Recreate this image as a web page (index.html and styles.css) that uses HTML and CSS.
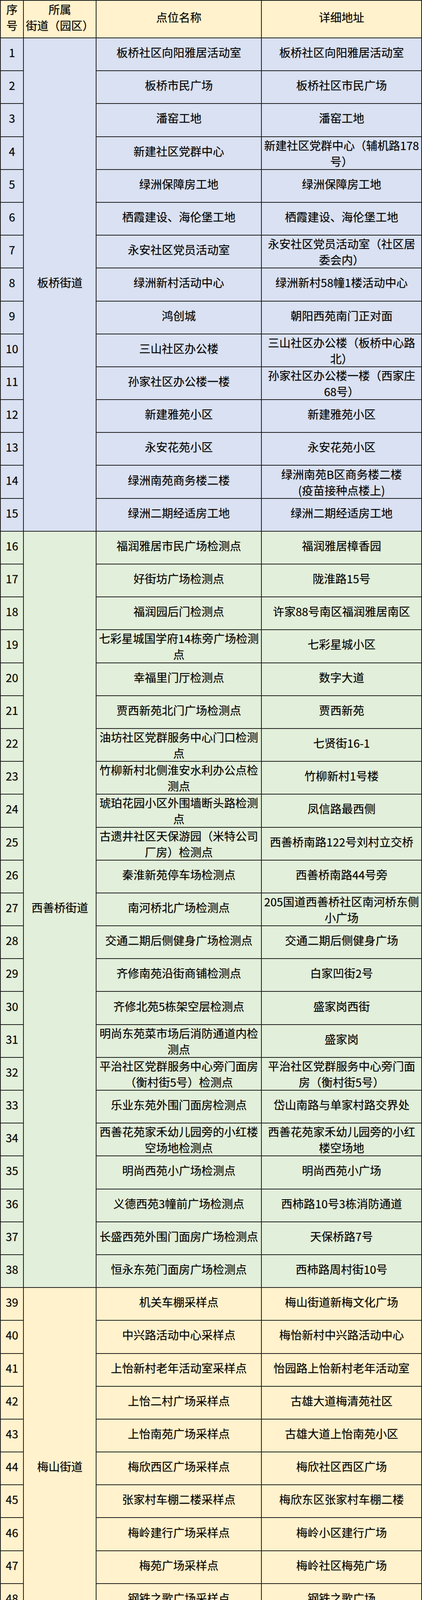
FILE: index.html
```html
<!DOCTYPE html>
<html lang="zh-CN">
<head>
<meta charset="utf-8">
<title>核酸检测采样点位表</title>
<link rel="stylesheet" href="styles.css">
</head>
<body>
<div class="sheet">
  <div class="cell head two no">序<br>号</div>
  <div class="cell head two st">所属<br>街道（园区）</div>
  <div class="cell head nm">点位名称</div>
  <div class="cell head ad">详细地址</div>

  <div class="cell b no">1</div><div class="cell b st span15">板桥街道</div><div class="cell b nm">板桥社区向阳雅居活动室</div><div class="cell b ad">板桥社区向阳雅居活动室</div>
  <div class="cell b no">2</div><div class="cell b nm">板桥市民广场</div><div class="cell b ad">板桥社区市民广场</div>
  <div class="cell b no">3</div><div class="cell b nm">潘窑工地</div><div class="cell b ad">潘窑工地</div>
  <div class="cell b no">4</div><div class="cell b nm">新建社区党群中心</div><div class="cell b ad two">新建社区党群中心（辅机路178<br>号）</div>
  <div class="cell b no">5</div><div class="cell b nm">绿洲保障房工地</div><div class="cell b ad">绿洲保障房工地</div>
  <div class="cell b no">6</div><div class="cell b nm">栖霞建设、海伦堡工地</div><div class="cell b ad">栖霞建设、海伦堡工地</div>
  <div class="cell b no">7</div><div class="cell b nm">永安社区党员活动室</div><div class="cell b ad two">永安社区党员活动室（社区居<br>委会内）</div>
  <div class="cell b no">8</div><div class="cell b nm">绿洲新村活动中心</div><div class="cell b ad">绿洲新村58幢1楼活动中心</div>
  <div class="cell b no">9</div><div class="cell b nm">鸿创城</div><div class="cell b ad">朝阳西苑南门正对面</div>
  <div class="cell b no">10</div><div class="cell b nm">三山社区办公楼</div><div class="cell b ad two">三山社区办公楼（板桥中心路<br>北）</div>
  <div class="cell b no">11</div><div class="cell b nm">孙家社区办公楼一楼</div><div class="cell b ad two">孙家社区办公楼一楼（西家庄<br>68号）</div>
  <div class="cell b no">12</div><div class="cell b nm">新建雅苑小区</div><div class="cell b ad">新建雅苑小区</div>
  <div class="cell b no">13</div><div class="cell b nm">永安花苑小区</div><div class="cell b ad">永安花苑小区</div>
  <div class="cell b no">14</div><div class="cell b nm">绿洲南苑商务楼二楼</div><div class="cell b ad two">绿洲南苑B区商务楼二楼<br>(疫苗接种点楼上)</div>
  <div class="cell b no">15</div><div class="cell b nm">绿洲二期经适房工地</div><div class="cell b ad">绿洲二期经适房工地</div>

  <div class="cell g no">16</div><div class="cell g st span23">西善桥街道</div><div class="cell g nm">福润雅居市民广场检测点</div><div class="cell g ad">福润雅居樟香园</div>
  <div class="cell g no">17</div><div class="cell g nm">好街坊广场检测点</div><div class="cell g ad">陇淮路15号</div>
  <div class="cell g no">18</div><div class="cell g nm">福润园后门检测点</div><div class="cell g ad">许家88号南区福润雅居南区</div>
  <div class="cell g no">19</div><div class="cell g nm two">七彩星城国学府14栋旁广场检测<br>点</div><div class="cell g ad">七彩星城小区</div>
  <div class="cell g no">20</div><div class="cell g nm">幸福里门厅检测点</div><div class="cell g ad">数字大道</div>
  <div class="cell g no">21</div><div class="cell g nm">贾西新苑北门广场检测点</div><div class="cell g ad">贾西新苑</div>
  <div class="cell g no">22</div><div class="cell g nm two">油坊社区党群服务中心门口检测<br>点</div><div class="cell g ad">七贤街16-1</div>
  <div class="cell g no">23</div><div class="cell g nm two">竹柳新村北侧淮安水利办公点检<br>测点</div><div class="cell g ad">竹柳新村1号楼</div>
  <div class="cell g no">24</div><div class="cell g nm two">琥珀花园小区外围墙断头路检测<br>点</div><div class="cell g ad">凤信路最西侧</div>
  <div class="cell g no">25</div><div class="cell g nm two">古遗井社区天保游园（米特公司<br>厂房）检测点</div><div class="cell g ad">西善桥南路122号刘村立交桥</div>
  <div class="cell g no">26</div><div class="cell g nm">秦淮新苑停车场检测点</div><div class="cell g ad">西善桥南路44号旁</div>
  <div class="cell g no">27</div><div class="cell g nm">南河桥北广场检测点</div><div class="cell g ad two">205国道西善桥社区南河桥东侧<br>小广场</div>
  <div class="cell g no">28</div><div class="cell g nm">交通二期后侧健身广场检测点</div><div class="cell g ad">交通二期后侧健身广场</div>
  <div class="cell g no">29</div><div class="cell g nm">齐修南苑沿街商铺检测点</div><div class="cell g ad">白家凹街2号</div>
  <div class="cell g no">30</div><div class="cell g nm">齐修北苑5栋架空层检测点</div><div class="cell g ad">盛家岗西街</div>
  <div class="cell g no">31</div><div class="cell g nm two">明尚东苑菜市场后消防通道内检<br>测点</div><div class="cell g ad">盛家岗</div>
  <div class="cell g no">32</div><div class="cell g nm two">平治社区党群服务中心旁门面房<br>（衡村街5号）检测点</div><div class="cell g ad two">平治社区党群服务中心旁门面<br>房（衡村街5号）</div>
  <div class="cell g no">33</div><div class="cell g nm">乐业东苑外围门面房检测点</div><div class="cell g ad">岱山南路与单家村路交界处</div>
  <div class="cell g no">34</div><div class="cell g nm two">西善花苑家禾幼儿园旁的小红楼<br>空场地检测点</div><div class="cell g ad two">西善花苑家禾幼儿园旁的小红<br>楼空场地</div>
  <div class="cell g no">35</div><div class="cell g nm">明尚西苑小广场检测点</div><div class="cell g ad">明尚西苑小广场</div>
  <div class="cell g no">36</div><div class="cell g nm">义德西苑3幢前广场检测点</div><div class="cell g ad">西柿路10号3栋消防通道</div>
  <div class="cell g no">37</div><div class="cell g nm">长盛西苑外围门面房广场检测点</div><div class="cell g ad">天保桥路7号</div>
  <div class="cell g no">38</div><div class="cell g nm">恒永东苑门面房广场检测点</div><div class="cell g ad">西柿路周村街10号</div>

  <div class="cell y no">39</div><div class="cell y st span11">梅山街道</div><div class="cell y nm">机关车棚采样点</div><div class="cell y ad">梅山街道新梅文化广场</div>
  <div class="cell y no">40</div><div class="cell y nm">中兴路活动中心采样点</div><div class="cell y ad">梅怡新村中兴路活动中心</div>
  <div class="cell y no">41</div><div class="cell y nm">上怡新村老年活动室采样点</div><div class="cell y ad">怡园路上怡新村老年活动室</div>
  <div class="cell y no">42</div><div class="cell y nm">上怡二村广场采样点</div><div class="cell y ad">古雄大道梅清苑社区</div>
  <div class="cell y no">43</div><div class="cell y nm">上怡南苑广场采样点</div><div class="cell y ad">古雄大道上怡南苑小区</div>
  <div class="cell y no">44</div><div class="cell y nm">梅欣西区广场采样点</div><div class="cell y ad">梅欣社区西区广场</div>
  <div class="cell y no">45</div><div class="cell y nm">张家村车棚二楼采样点</div><div class="cell y ad">梅欣东区张家村车棚二楼</div>
  <div class="cell y no">46</div><div class="cell y nm">梅岭建行广场采样点</div><div class="cell y ad">梅岭小区建行广场</div>
  <div class="cell y no">47</div><div class="cell y nm">梅苑广场采样点</div><div class="cell y ad">梅岭社区梅苑广场</div>
  <div class="cell y no">48</div><div class="cell y nm">钢铁之歌广场采样点</div><div class="cell y ad">钢铁之歌广场</div>
  <div class="cell y no">49</div><div class="cell y nm">热轧厂1780食堂采样点</div><div class="cell y ad">梅钢公司热轧厂1780食堂</div>

  <div class="cell b no">50</div><div class="cell b st span18">古雄街道</div><div class="cell b nm">古雄老村部采样点</div><div class="cell b ad">板桥老街古雄老村部</div>
  <div class="cell b no">51</div><div class="cell b nm">和昌湾景售楼处采样点</div><div class="cell b ad">和昌湾景售楼处</div>
  <div class="cell b no">52</div><div class="cell b nm">富力星光邻商贸体采样点</div><div class="cell b ad">富力星光邻商贸体</div>
  <div class="cell b no">53</div><div class="cell b nm">金地一期物业采样点</div><div class="cell b ad">金地一期物业办公室</div>
  <div class="cell b no">54</div><div class="cell b nm two">金地二期大方社区党群服务中心<br>采样点</div><div class="cell b ad two">金地二期大方社区党群服务中<br>心</div>
  <div class="cell b no">55</div><div class="cell b nm">金地三期嘉伦光彩大药房采样点</div><div class="cell b ad">金地三期嘉伦光彩大药房</div>
  <div class="cell b no">56</div><div class="cell b nm">金地八期社区广场采样点</div><div class="cell b ad">金地八期社区广场</div>
  <div class="cell b no">57</div><div class="cell b nm">宋都南郡为民服务中心采样点</div><div class="cell b ad two">新湖大道12号宋都南郡为民服<br>务中心</div>
  <div class="cell b no">58</div><div class="cell b nm">宋都南郡北区物业用房采样点</div><div class="cell b ad">宋都南郡北区物业用房</div>
  <div class="cell b no">59</div><div class="cell b nm">大方小学采样点</div><div class="cell b ad">原大方小学</div>
  <div class="cell b no">60</div><div class="cell b nm">柿子树中心村百富家具厂采样点</div><div class="cell b ad">柿子树中心村百富家具厂内</div>
  <div class="cell b no">61</div><div class="cell b nm">柿子树社区党群服务中心采样点</div><div class="cell b ad">柿子树社区党群服务中心</div>
  <div class="cell b no">62</div><div class="cell b nm">新林社区党群服务中心采样点</div><div class="cell b ad">新林社区党群服务中心</div>
  <div class="cell b no">63</div><div class="cell b nm">吾悦广场采样点</div><div class="cell b ad two">新林大道与新城大街交叉口西<br>300米吾悦广场</div>
  <div class="cell b no">64</div><div class="cell b nm">朗诗一期广场采样点</div><div class="cell b ad">新亭大街66号朗诗一期广场</div>
  <div class="cell b no">65</div><div class="cell b nm">朗诗二期广场采样点</div><div class="cell b ad two">新林大道与湖景路交叉口东南<br>200米朗诗二期广场</div>
  <div class="cell b no">66</div><div class="cell b nm">金域华府贵宾楼采样点</div><div class="cell b ad">金域华府贵宾楼通道内</div>
  <div class="cell b no">67</div><div class="cell b nm">古雄新居南门采样点</div><div class="cell b ad">古雄新居南门</div>

  <div class="cell g no">68</div><div class="cell g st span7">雨花经济<br>开发区</div><div class="cell g nm">锦华新城社区</div><div class="cell g ad two">锦华新城社区党群服务中心西<br>门</div>
  <div class="cell g no">69</div><div class="cell g nm">梦幻家小区</div><div class="cell g ad">梦幻家售楼处</div>
  <div class="cell g no">70</div><div class="cell g nm">金叶花园小区</div><div class="cell g ad two">金叶花园小区广场（龙飞路<br>8号）</div>
  <div class="cell g no">71</div><div class="cell g nm">凤凰美地小区</div><div class="cell g ad two">凤凰美地小区大门向东100米<br>(原凤凰美地售楼处)</div>
  <div class="cell g no">72</div><div class="cell g nm">数出公司</div><div class="cell g ad two">大吉控股体育馆（凤汇大道37<br>号）</div>
  <div class="cell g no">73</div><div class="cell g nm">弘阳市场检测点</div><div class="cell g ad two">弘阳装饰城弘阳大道（弘阳家<br>居博览中心）</div>
  <div class="cell g no">74</div><div class="cell g nm">汽贸区</div><div class="cell g ad two">汽贸区原标致4S店（天驰路与<br>雨瑞路交叉口东约40米）</div>
</div>
</body>
</html>
```

FILE: styles.css
```css
html, body {
  margin: 0;
  padding: 0;
  background: #ffffff;
}

.sheet {
  box-sizing: border-box;
  width: 1080px;
  display: grid;
  grid-template-columns: 57px 184px 421px 408px;
  grid-template-rows: 94px repeat(74, 82.1875px);
  gap: 2px;
  padding: 2px;
  background: #1e1e1e;
  font-family: "Noto Sans CJK SC", "Noto Sans", sans-serif;
  font-size: 29px;
  color: #000000;
}

.cell {
  display: flex;
  align-items: center;
  justify-content: center;
  text-align: center;
  overflow: hidden;
  white-space: nowrap;
  line-height: 44px;
  padding: 0 3px 12px;
  min-width: 0;
  min-height: 0;
  text-shadow: 1px 1px 1px rgba(0, 0, 0, 0.25);
}

.cell.two {
  line-height: 41px;
  padding-bottom: 0;
}

.head {
  background: #fff2cc;
}

.head.two {
  padding-bottom: 10px;
}

.st.span7 {
  line-height: 44px;
  padding-bottom: 12px;
}

.b { background: #d9e1f2; }
.g { background: #e2efda; }
.y { background: #fff2cc; }

.no { grid-column: 1; }
.st { grid-column: 2; }
.nm { grid-column: 3; }
.ad { grid-column: 4; }

.span15 { grid-row: span 15; }
.span23 { grid-row: span 23; }
.span11 { grid-row: span 11; }
.span18 { grid-row: span 18; }
.span7 { grid-row: span 7; }
```
